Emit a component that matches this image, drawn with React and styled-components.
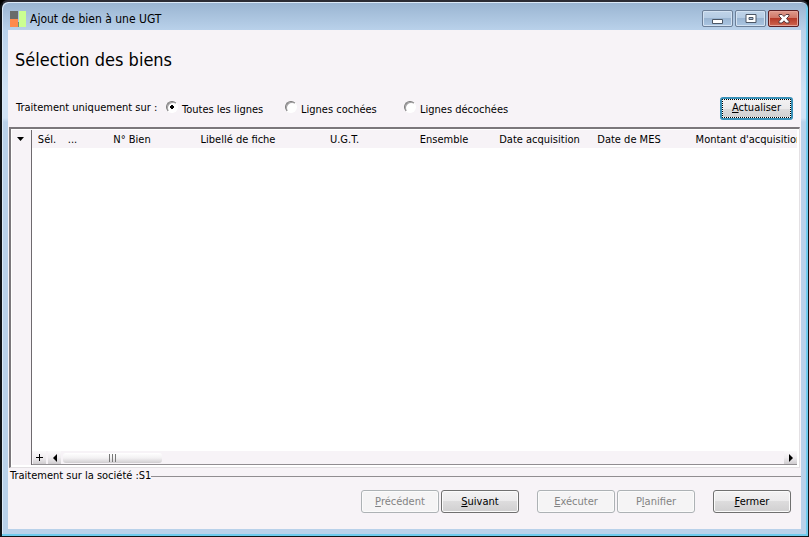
import { useState } from "react"
import styled, { createGlobalStyle, css } from "styled-components"

const GlobalStyle = createGlobalStyle`
    * {
        box-sizing: border-box;
    }

    body {
        margin: 0;
        background-color: #000;
        color: #000;
        font-family: "DejaVu Sans Condensed", "DejaVu Sans", sans-serif;
        font-size: 11px;
        line-height: 14px;
    }

    button,
    input {
        font: inherit;
        color: inherit;
        margin: 0;
        padding: 0;
    }
`

const Window = styled.div`
    display: flex;
    flex-direction: column;
    height: 100vh;
    min-height: 320px;
    padding: 0 7px 7px 6px;
    border: 1px solid #101418;
    border-top: 2px solid #2c2c34;
    border-left-width: 2px;
    border-radius: 8px 8px 0 0;
    background: linear-gradient(
        #99b4d1,
        #b9d1ea 28px,
        #d0e2f5 90px,
        #d0e2f5 116px,
        #b9d1ea 120px
    );
    box-shadow: inset -2px -2px 0 #6fcbed, inset 1px 1px 0 #dceaf8;
`

const TitleBar = styled.header`
    display: flex;
    align-items: center;
    flex: none;
    height: 28px;
    padding: 5px 2px 0;
`

const WindowTitle = styled.span`
    flex: 1;
    margin-left: 4px;
    font-size: 12px;
`

const AppIcon = styled.svg`
    width: 16px;
    height: 16px;
`

const Captions = styled.div`
    display: flex;
    gap: 2px;
`

const CaptionButton = styled.button`
    display: flex;
    align-items: center;
    justify-content: center;
    width: 31px;
    height: 17px;
    border: 1px solid ${({ $close }) => ($close ? "#5b2025" : "#6c7f98")};
    border-radius: 2px;
    box-shadow: inset 0 0 0 1px
        ${({ $close }) => ($close ? "#e5a398" : "#d3e2f2")};
    background: ${({ $close }) =>
        $close
            ? "linear-gradient(#df9b8d, #cf7364 50%, #b53a29 50%, #cf6650)"
            : "linear-gradient(#c0d4e9, #b4cbe3 50%, #9ab5d2 50%, #abc6e2)"};
`

const Client = styled.main`
    display: flex;
    flex-direction: column;
    flex: 1;
    min-height: 0;
    background-color: #f7f3f7;
`

const Heading = styled.h1`
    margin: 20px 7px 0;
    font-size: 18px;
    font-weight: 400;
    line-height: 20px;
`

const Filters = styled.div`
    display: flex;
    align-items: center;
    flex: none;
    height: 24px;
    margin: 26px 8px 7px;
`

const FilterLabel = styled.span`
    width: 150px;
`

const Options = styled.div`
    display: flex;
    flex: 1;
`

const Option = styled.label`
    display: flex;
    align-items: flex-end;
    gap: 4px;
    width: 119px;
    padding-top: 2px;
    white-space: nowrap;
`

const Radio = styled.input`
    appearance: none;
    width: 12px;
    height: 12px;
    margin-bottom: 4px;
    border: 1px solid;
    border-color: #777 #fff #fff #777;
    border-radius: 50%;
    background-color: #fff;
    box-shadow: inset 1px 1px 0 #a5a2a5;

    &:checked {
        background-image: radial-gradient(#000 2px, transparent 2px);
    }
`

const Button = styled.button`
    width: 78px;
    height: 23px;
    border: 1px solid #707070;
    border-radius: 3px;
    background: linear-gradient(#f3f2f3, #ebeaeb 50%, #dddcdd 50%, #d0cfd0);
    box-shadow: inset 0 0 0 1px #fbfbfb;

    &:disabled {
        border-color: #adb2b5;
        background: #f5f4f5;
        color: #838383;
    }

    ${({ $active }) =>
        $active &&
        css`
            width: 73px;
            border: 2px solid #3a91b8;
            box-shadow: inset 0 0 0 1px #fff;
            outline: 1px dotted #000;
            outline-offset: -3px;
        `}
`

const Grid = styled.section`
    display: flex;
    flex: 1;
    min-height: 0;
    margin: 0 1px;
    padding: 1px 2px 2px 1px;
    border: 1px solid #e3e0e3;
    border-top: 2px solid #7b777b;
    border-left: 2px solid #7b777b;
    background-color: #fff;
`

const Gutter = styled.div`
    flex: none;
    width: 20px;
    border-right: 1px solid #6e6a6e;
    background-color: #f7f3f7;
`

const GutterButton = styled.button`
    display: flex;
    align-items: center;
    justify-content: center;
    width: 100%;
    height: 18px;
    padding-right: 2px;
    border: 0;
    background: none;
`

const Sheet = styled.div`
    display: flex;
    flex-direction: column;
    flex: 1;
    min-width: 0;
`

const Rows = styled.div`
    flex: 1;
    overflow: hidden;
`

const Table = styled.table`
    width: 793px;
    table-layout: fixed;
    border-collapse: collapse;
`

const Th = styled.th`
    height: 18px;
    padding: 2px 0 0;
    background-color: #f7f3f7;
    font-weight: 400;
    text-align: center;
    white-space: nowrap;
`

const ScrollBar = styled.div`
    display: flex;
    align-items: center;
    gap: 2px;
    flex: none;
    height: 14px;
    padding-left: 1px;
    border-bottom: 1px solid #918d91;
    background-color: #f7f3f7;
`

const ScrollButton = styled.button`
    display: flex;
    align-items: center;
    justify-content: center;
    width: 13px;
    height: 13px;
    border: 0;
    background: linear-gradient(#fbf9fb, #f0edf0 50%, #cfcccf);
`

const Track = styled.div`
    flex: 1;
`

const Thumb = styled.div`
    display: flex;
    align-items: center;
    justify-content: center;
    gap: 2px;
    width: 99px;
    height: 10px;
    border-radius: 3px;
    background: linear-gradient(#fff, #f3f1f3 50%, #d0cdd0);
`

const Grip = styled.i`
    width: 1px;
    height: 8px;
    background-color: #777;
`

const Footer = styled.fieldset`
    flex: none;
    min-width: 0;
    margin: 1px 0 0;
    padding: 7px 10px 16px;
    border: 0;
    border-top: 1px solid #918d91;
`

const Legend = styled.legend`
    margin-left: -10px;
    padding: 0 0 0 2px;
`

const Actions = styled.div`
    display: flex;
    justify-content: flex-end;
    gap: 18px;
`

const ButtonGroup = styled.div`
    display: flex;
    gap: 2px;
`

const columns = [
    { label: "Sél.", width: 30 },
    { label: "...", width: 21 },
    { label: "N° Bien", width: 98 },
    { label: "Libellé de fiche", width: 114 },
    { label: "U.G.T.", width: 99 },
    { label: "Ensemble", width: 100 },
    { label: "Date acquisition", width: 91 },
    { label: "Date de MES", width: 88 },
    { label: "Montant d'acquisition", width: 152 },
]

const filters = ["Toutes les lignes", "Lignes cochées", "Lignes décochées"]

const App = () => {
    const [filter, setFilter] = useState(filters[0])

    return (
        <>
            <GlobalStyle />
            <Window>
                <TitleBar>
                    <AppIcon viewBox="0 0 16 16" aria-hidden="true">
                        <path fill="#686c6b" d="M0 0h8v8H0z" />
                        <path fill="#ff8a4c" d="M0 8h8v8H0z" />
                        <path fill="#cbff92" d="M9 0h7v16H9z" />
                        <path fill="#6f8f70" d="M8 11h1v5H8z" />
                    </AppIcon>
                    <WindowTitle>Ajout de bien à une UGT</WindowTitle>
                    <Captions>
                        <CaptionButton aria-label="Réduire">
                            <svg width="12" height="12" viewBox="0 0 12 12">
                                <path
                                    fill="#fff"
                                    stroke="#4c5766"
                                    d="M.5 6.5h10v4H.5z"
                                />
                            </svg>
                        </CaptionButton>
                        <CaptionButton aria-label="Agrandir">
                            <svg width="12" height="10" viewBox="0 0 12 10">
                                <path
                                    fill="#fff"
                                    stroke="#4c5766"
                                    d="M1 .5h10v8H1z"
                                />
                                <path
                                    fill="#a9c0da"
                                    stroke="#4c5766"
                                    d="M4 3.5h4v2H4z"
                                />
                            </svg>
                        </CaptionButton>
                        <CaptionButton $close aria-label="Fermer la fenêtre">
                            <svg width="12" height="10" viewBox="0 0 12 10">
                                <path
                                    fill="#fff"
                                    stroke="#57383c"
                                    d="M1 .5h3L6 2.500 8 .5h3v1.500L8.500 4.500 11 7.500V9H8L6 6.800 4 9H1V7.500l2.500-3L1 2z"
                                />
                            </svg>
                        </CaptionButton>
                    </Captions>
                </TitleBar>
                <Client>
                    <Heading>Sélection des biens</Heading>
                    <Filters>
                        <FilterLabel id="filter-label">
                            Traitement uniquement sur :
                        </FilterLabel>
                        <Options
                            role="radiogroup"
                            aria-labelledby="filter-label"
                        >
                            {filters.map((name) => (
                                <Option key={name}>
                                    <Radio
                                        type="radio"
                                        name="filter"
                                        checked={filter === name}
                                        onChange={() => setFilter(name)}
                                    />
                                    {name}
                                </Option>
                            ))}
                        </Options>
                        <Button $active>
                            <u>A</u>ctualiser
                        </Button>
                    </Filters>
                    <Grid>
                        <Gutter>
                            <GutterButton aria-label="Menu">
                                <svg width="7" height="4" viewBox="0 0 7 4">
                                    <path d="M0 0h7L3.500 4z" />
                                </svg>
                            </GutterButton>
                        </Gutter>
                        <Sheet>
                            <Rows>
                                <Table>
                                    <colgroup>
                                        {columns.map(({ label, width }) => (
                                            <col key={label} width={width} />
                                        ))}
                                    </colgroup>
                                    <thead>
                                        <tr>
                                            {columns.map(({ label }) => (
                                                <Th key={label} scope="col">
                                                    {label}
                                                </Th>
                                            ))}
                                        </tr>
                                    </thead>
                                </Table>
                            </Rows>
                            <ScrollBar>
                                <ScrollButton aria-label="Ajouter">
                                    <svg width="7" height="7" viewBox="0 0 7 7">
                                        <path d="M3 0h1v3h3v1H4v3H3V4H0V3h3z" />
                                    </svg>
                                </ScrollButton>
                                <ScrollButton aria-label="Défiler à gauche">
                                    <svg width="4" height="8" viewBox="0 0 4 8">
                                        <path d="M4 0v8L0 4z" />
                                    </svg>
                                </ScrollButton>
                                <Track>
                                    <Thumb>
                                        <Grip />
                                        <Grip />
                                        <Grip />
                                    </Thumb>
                                </Track>
                                <ScrollButton aria-label="Défiler à droite">
                                    <svg width="4" height="8" viewBox="0 0 4 8">
                                        <path d="M0 0v8l4-4z" />
                                    </svg>
                                </ScrollButton>
                            </ScrollBar>
                        </Sheet>
                    </Grid>
                    <Footer>
                        <Legend>Traitement sur la société :S1</Legend>
                        <Actions>
                            <ButtonGroup>
                                <Button disabled>
                                    <u>P</u>récédent
                                </Button>
                                <Button>
                                    <u>S</u>uivant
                                </Button>
                            </ButtonGroup>
                            <ButtonGroup>
                                <Button disabled>
                                    <u>E</u>xécuter
                                </Button>
                                <Button disabled>
                                    P<u>l</u>anifier
                                </Button>
                            </ButtonGroup>
                            <Button>
                                <u>F</u>ermer
                            </Button>
                        </Actions>
                    </Footer>
                </Client>
            </Window>
        </>
    )
}

export default App
